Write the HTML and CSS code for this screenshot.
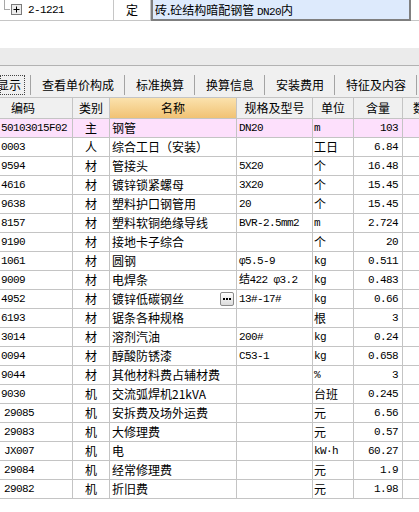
FILE: index.html
```html
<!DOCTYPE html>
<html lang="zh-CN">
<head>
<meta charset="utf-8">
<title>定额子目</title>
<link rel="stylesheet" href="styles.css">
</head>
<body>
<div class="top">
  <div class="tree">
    <span class="branch"></span>
    <svg class="plus" width="11" height="11" viewBox="0 0 11 11"><rect x="0.5" y="0.5" width="10" height="10" fill="#ececec" stroke="#7a7a7a"/><path d="M2.5 5.5h6M5.5 2.5v6" stroke="#000" stroke-width="1"/></svg>
    <span class="mono code">2-1221</span>
  </div>
  <div class="kind">定</div>
  <div class="edit">砖.砼结构暗配钢管 <span class="mono">DN20</span>内</div>
</div>
<div class="gap"></div>
<div class="band"></div>
<div class="tabs">
  <div class="tab first"><span class="focus">显示</span></div>
  <div class="tab">查看单价构成</div>
  <div class="tab">标准换算</div>
  <div class="tab">换算信息</div>
  <div class="tab">安装费用</div>
  <div class="tab">特征及内容</div>
  <div class="tab"></div>
</div>
<div class="gridwrap">
<table class="grid">
  <colgroup>
    <col class="c1"><col class="c2"><col class="c3"><col class="c4"><col class="c5"><col class="c6"><col class="c7">
  </colgroup>
  <thead>
    <tr><th class="hcode">编码</th><th>类别</th><th class="hname">名称</th><th>规格及型号</th><th>单位</th><th>含量</th><th class="hlast">数</th></tr>
  </thead>
  <tbody>
    <tr class="main"><td class="mono code">50103015F02</td><td class="cat">主</td><td class="name">钢管</td><td class="mono spec">DN20</td><td class="mono unit">m</td><td class="mono qty">103</td><td></td></tr>
    <tr><td class="mono code">0003</td><td class="cat">人</td><td class="name">综合工日（安装）</td><td class="spec"></td><td class="unit">工日</td><td class="mono qty">6.84</td><td></td></tr>
    <tr><td class="mono code">9594</td><td class="cat">材</td><td class="name">管接头</td><td class="mono spec">5X20</td><td class="unit">个</td><td class="mono qty">16.48</td><td></td></tr>
    <tr><td class="mono code">4616</td><td class="cat">材</td><td class="name">镀锌锁紧螺母</td><td class="mono spec">3X20</td><td class="unit">个</td><td class="mono qty">15.45</td><td></td></tr>
    <tr><td class="mono code">9638</td><td class="cat">材</td><td class="name">塑料护口钢管用</td><td class="mono spec">20</td><td class="unit">个</td><td class="mono qty">15.45</td><td></td></tr>
    <tr><td class="mono code">8157</td><td class="cat">材</td><td class="name">塑料软铜绝缘导线</td><td class="mono spec">BVR-2.5mm2</td><td class="mono unit">m</td><td class="mono qty">2.724</td><td></td></tr>
    <tr><td class="mono code">9190</td><td class="cat">材</td><td class="name">接地卡子综合</td><td class="spec"></td><td class="unit">个</td><td class="mono qty">20</td><td></td></tr>
    <tr><td class="mono code">1061</td><td class="cat">材</td><td class="name">圆钢</td><td class="mono spec">φ5.5-9</td><td class="mono unit">kg</td><td class="mono qty">0.511</td><td></td></tr>
    <tr><td class="mono code">9009</td><td class="cat">材</td><td class="name">电焊条</td><td class="mono spec">结422 φ3.2</td><td class="mono unit">kg</td><td class="mono qty">0.483</td><td></td></tr>
    <tr><td class="mono code">4952</td><td class="cat">材</td><td class="name">镀锌低碳钢丝<span class="dots"><i></i><i></i><i></i></span></td><td class="mono spec">13#-17#</td><td class="mono unit">kg</td><td class="mono qty">0.66</td><td></td></tr>
    <tr><td class="mono code">6193</td><td class="cat">材</td><td class="name">锯条各种规格</td><td class="spec"></td><td class="unit">根</td><td class="mono qty">3</td><td></td></tr>
    <tr><td class="mono code">3014</td><td class="cat">材</td><td class="name">溶剂汽油</td><td class="mono spec">200#</td><td class="mono unit">kg</td><td class="mono qty">0.24</td><td></td></tr>
    <tr><td class="mono code">0094</td><td class="cat">材</td><td class="name">醇酸防锈漆</td><td class="mono spec">C53-1</td><td class="mono unit">kg</td><td class="mono qty">0.658</td><td></td></tr>
    <tr><td class="mono code">9044</td><td class="cat">材</td><td class="name">其他材料费占辅材费</td><td class="spec"></td><td class="mono unit">%</td><td class="mono qty">3</td><td></td></tr>
    <tr><td class="mono code">9030</td><td class="cat">机</td><td class="name">交流弧焊机21kVA</td><td class="spec"></td><td class="unit">台班</td><td class="mono qty">0.245</td><td></td></tr>
    <tr><td class="mono code in">29085</td><td class="cat">机</td><td class="name">安拆费及场外运费</td><td class="spec"></td><td class="unit">元</td><td class="mono qty">6.56</td><td></td></tr>
    <tr><td class="mono code in">29083</td><td class="cat">机</td><td class="name">大修理费</td><td class="spec"></td><td class="unit">元</td><td class="mono qty">0.57</td><td></td></tr>
    <tr><td class="mono code in">JX007</td><td class="cat">机</td><td class="name">电</td><td class="spec"></td><td class="mono unit">kW·h</td><td class="mono qty">60.27</td><td></td></tr>
    <tr><td class="mono code in">29084</td><td class="cat">机</td><td class="name">经常修理费</td><td class="spec"></td><td class="unit">元</td><td class="mono qty">1.9</td><td></td></tr>
    <tr><td class="mono code in">29082</td><td class="cat">机</td><td class="name">折旧费</td><td class="spec"></td><td class="unit">元</td><td class="mono qty">1.98</td><td></td></tr>
  </tbody>
</table>
</div>
</body>
</html>
```
FILE: styles.css
```css
html, body {
  margin: 0;
  padding: 0;
  background: #ffffff;
}
body {
  width: 419px;
  overflow: hidden;
  font-family: "Noto Sans CJK SC", sans-serif;
  font-size: 12px;
  color: #000;
}
.mono {
  font-family: "Liberation Mono", "Noto Sans CJK SC", monospace;
  font-size: 11px;
  letter-spacing: -0.6px;
}

/* top tree row */
.top {
  display: flex;
  height: 20px;
  border-bottom: 1px solid #c6c6c6;
}
.tree {
  width: 113px;
  flex: none;
  border-right: 1px solid #c6c6c6;
  display: flex;
  align-items: center;
}
.branch {
  align-self: flex-start;
  width: 5px;
  height: 9px;
  margin-left: 4px;
  border-left: 1px solid #a8a8a8;
  border-bottom: 1px solid #a8a8a8;
}
.plus {
  margin-left: 1px;
  margin-top: -1px;
  display: block;
}
.top .code {
  margin-left: 6px;
}
.kind {
  width: 36px;
  flex: none;
  border-right: 1px solid #c6c6c6;
  text-align: center;
  line-height: 20px;
}
.edit {
  width: 260px;
  flex: none;
  height: 21px;
  margin-bottom: -1px;
  box-sizing: border-box;
  border: 2px solid #7f7f7f;
  border-top: none;
  border-left-width: 2px;
  background: #ddeafc;
  padding-left: 2px;
  line-height: 19px;
  white-space: nowrap;
  overflow: hidden;
}

.gap {
  height: 27px;
}
.band {
  height: 17px;
  background: #ebebeb;
  border-bottom: 1px solid #b2b2b2;
}

/* tab bar */
.tabs {
  display: flex;
  height: 20px;
  padding: 9px 0 2px;
  background: #f0f0f0;
  overflow: hidden;
  white-space: nowrap;
}
.tab {
  flex: none;
  height: 20px;
  line-height: 20px;
  padding: 0 10px 0 11px;
  border-right: 1px solid #a3a3a3;
}
.tab.first {
  padding: 0 5px 0 0;
}
.focus {
  display: block;
  width: 25px;
  height: 20px;
  box-sizing: border-box;
  border: 1px dotted #444;
  line-height: 18px;
  text-indent: -4px;
  overflow: hidden;
}

/* grid */
.gridwrap {
  width: 419px;
  overflow: hidden;
}
.grid {
  width: 460px;
  table-layout: fixed;
  border-collapse: separate;
  border-spacing: 0;
}
.c1 { width: 73px; }
.c2 { width: 37px; }
.c3 { width: 127px; }
.c4 { width: 76px; }
.c5 { width: 41px; }
.c6 { width: 49px; }
.c7 { width: 57px; }

.grid th,
.grid td {
  box-sizing: border-box;
  padding: 0;
  border-right: 1px solid #c4c4c4;
  border-bottom: 1px solid #c4c4c4;
  white-space: nowrap;
  overflow: hidden;
}
.grid th {
  height: 22px;
  border-top: 1px solid #c4c4c4;
  background: #f0f0f0;
  font-weight: normal;
  text-align: center;
  line-height: 20px;
}
.grid th.hcode {
  text-align: left;
  padding-left: 11px;
}
.grid th.hname {
  background: linear-gradient(#fbe2ad, #f1c274);
}
.grid th.hlast {
  text-align: left;
  padding-left: 10px;
}
.grid td {
  height: 19px;
  line-height: 18px;
}
.grid tr.main td {
  background: #fde0fc;
}
.grid td.code {
  padding-left: 1px;
}
.grid td.code.in {
  padding-left: 4px;
}
.grid td.cat {
  text-align: center;
}
.grid td.name {
  padding-left: 2px;
}
.grid td.spec {
  padding-left: 2px;
}
.grid td.unit {
  padding-left: 1px;
}
.grid td.qty {
  text-align: right;
  padding-right: 4px;
}
.dots {
  float: right;
  margin: 2px 2px 0 0;
  width: 14px;
  height: 14px;
  box-sizing: border-box;
  border: 1px solid #8a8a8a;
  border-radius: 2px;
  background: linear-gradient(#ffffff, #dcdcdc);
  display: flex;
  align-items: center;
  justify-content: center;
  gap: 1px;
}
.dots i {
  display: block;
  width: 2px;
  height: 2px;
  background: #000;
}
```
